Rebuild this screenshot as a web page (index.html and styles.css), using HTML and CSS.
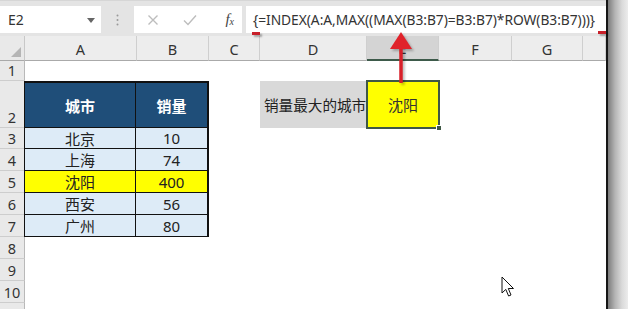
FILE: index.html
```html
<!DOCTYPE html>
<html lang="zh">
<head>
<meta charset="utf-8">
<title>Excel INDEX MAX</title>
<link rel="stylesheet" href="styles.css">
</head>
<body>
<div class="screen">
  <div class="window">
    <div class="fbar">
      <div class="namebox">
        <span class="name">E2</span>
        <svg class="dd" width="8" height="5" viewBox="0 0 8 5"><path d="M0 0H8L4 5Z" fill="#666"/></svg>
      </div>
      <div class="grip">
        <svg width="3" height="12" viewBox="0 0 3 12"><circle cx="1.5" cy="1.5" r="1" fill="#999"/><circle cx="1.5" cy="6" r="1" fill="#999"/><circle cx="1.5" cy="10.5" r="1" fill="#999"/></svg>
      </div>
      <div class="fnbox">
        <svg class="ic" width="12" height="12" viewBox="0 0 12 12"><path d="M1.5 1.5L10.5 10.5M10.5 1.5L1.5 10.5" stroke="#bdbdbd" stroke-width="1.4" fill="none"/></svg>
        <svg class="ic" width="14" height="12" viewBox="0 0 14 12"><path d="M1 6.5L5 10.5L13 1.5" stroke="#bdbdbd" stroke-width="1.4" fill="none"/></svg>
        <span class="fx">f<sub>x</sub></span>
      </div>
      <div class="formula">{=INDEX(A:A,MAX((MAX(B3:B7)=B3:B7)*ROW(B3:B7)))}</div>
    </div>

    <div class="sheet">
      <div class="corner"><svg width="10" height="10" viewBox="0 0 10 10"><path d="M10 0V10H0Z" fill="#b5b5b5"/></svg></div>
      <div class="ch">A</div>
      <div class="ch">B</div>
      <div class="ch">C</div>
      <div class="ch">D</div>
      <div class="ch ch-sel">E</div>
      <div class="ch">F</div>
      <div class="ch">G</div>
      <div class="ch"></div>

      <div class="rh">1</div>
      <div class="rh">2</div>
      <div class="rh">3</div>
      <div class="rh">4</div>
      <div class="rh">5</div>
      <div class="rh">6</div>
      <div class="rh">7</div>
      <div class="rh">8</div>
      <div class="rh">9</div>
      <div class="rh">10</div>
      <div class="rh"></div>

      <div class="tbl">
        <div class="tc th">城市</div>
        <div class="tc th">销量</div>
        <div class="tc">北京</div>
        <div class="tc">10</div>
        <div class="tc">上海</div>
        <div class="tc">74</div>
        <div class="tc hl">沈阳</div>
        <div class="tc hl">400</div>
        <div class="tc">西安</div>
        <div class="tc">56</div>
        <div class="tc last">广州</div>
        <div class="tc last">80</div>
      </div>

      <div class="label">销量最大的城市</div>
      <div class="result">沈阳<span class="handle"></span></div>
    </div>

    <span class="mark mark-l"></span>
    <span class="mark mark-r"></span>
    <svg class="arrow" width="30" height="56" viewBox="0 0 30 56">
      <path d="M15 16V52" stroke="#d8202a" stroke-width="3.5"/>
      <path d="M4 18H26L15 1Z" fill="#e0232b"/>
    </svg>
    <svg class="cursor" width="14" height="22" viewBox="0 0 14 22">
      <path d="M1 1V17L4.8 13.4L7.6 20L10 19L7.3 12.5H12.5Z" fill="#fff" stroke="#111" stroke-width="1" stroke-linejoin="round"/>
    </svg>
  </div>
  <div class="shade"></div>
</div>
</body>
</html>
```

FILE: styles.css
```css
* { box-sizing: border-box; }
html, body { margin: 0; padding: 0; background: #fff; }
body { font-family: "Noto Sans", "Noto Sans CJK SC", sans-serif; color: #222; }

.screen {
  width: 628px;
  height: 309px;
  overflow: hidden;
  display: flex;
}
.window {
  position: relative;
  width: 608px;
  flex: none;
  background: #fff;
  border-right: 2px solid #151515;
  display: flex;
  flex-direction: column;
}
.shade {
  flex: 1;
  background: linear-gradient(to right, #7c7c7c 0%, #b4b4b4 35%, #dadada 70%, #ececec 100%);
}

/* formula bar */
.fbar {
  height: 36px;
  flex: none;
  background: #e4e4e4;
  display: flex;
  align-items: flex-start;
  padding-top: 5px;
  border-top: 1px solid #d6d6d6;
}
.namebox {
  width: 101px;
  height: 27px;
  background: #fff;
  display: flex;
  align-items: center;
  justify-content: space-between;
  padding: 0 6px 0 8px;
}
.name { font-size: 14px; color: #333; }
.dd { margin-top: 1px; }
.grip {
  width: 33px;
  height: 27px;
  display: flex;
  align-items: center;
  justify-content: center;
}
.fnbox {
  width: 108px;
  height: 27px;
  background: #fff;
  display: flex;
  align-items: center;
  padding: 0 8px 0 13px;
  gap: 22px;
}
.fnbox .ic:nth-child(2) { margin-left: 2px; }
.fx {
  font-family: "Liberation Serif", serif;
  font-style: italic;
  font-size: 15px;
  color: #444;
  margin-left: auto;
}
.fx sub { font-size: 10px; vertical-align: -1px; }
.formula {
  flex: 1;
  height: 27px;
  margin-left: 4px;
  background: #fff;
  padding-left: 7px;
  font-size: 13.8px;
  line-height: 27px;
  color: #333;
  white-space: nowrap;
  letter-spacing: -0.05px;
}

/* sheet grid */
.sheet {
  flex: 1;
  display: grid;
  grid-template-columns: 25px 112px 72px 51px 107px 72px 73px 71px 1fr;
  grid-template-rows: 25px 20px 47px 21px repeat(7, 22px) 22px;
  background: #fff;
}
.corner {
  background: #e9e9e9;
  border-right: 1px solid #c8c8c8;
  border-bottom: 1px solid #a9a9a9;
  display: flex;
  align-items: flex-end;
  justify-content: flex-end;
  padding: 0 3px 3px 0;
}
.ch {
  background: #ededed;
  border-right: 1px solid #cfcfcf;
  border-bottom: 1px solid #aaaaaa;
  font-size: 14.5px;
  color: #333;
  display: flex;
  align-items: center;
  justify-content: center;
  padding-top: 1px;
}
.ch-sel {
  background: #d4d4d4;
  border-bottom: 2px solid #3d5a4a;
}
.rh {
  grid-column: 1;
  background: #e9e9e9;
  border-right: 1px solid #b9b9b9;
  border-bottom: 1px solid #cdcdcd;
  font-size: 14.5px;
  line-height: 1;
  color: #333;
  display: flex;
  align-items: flex-end;
  justify-content: center;
  padding-bottom: 3px;
}

/* data table */
.tbl {
  grid-column: 2 / 4;
  grid-row: 3 / 9;
  margin-left: -1px;
  border: 2px solid #111;
  border-left-width: 1px;
  display: grid;
  grid-template-columns: 111px 1fr;
  grid-template-rows: 45px 21px 22px 22px 22px 1fr;
}
.tc {
  background: #ddebf7;
  border-bottom: 1px solid #111;
  display: flex;
  align-items: center;
  justify-content: center;
  font-size: 15px;
  color: #222;
}
.tc:nth-child(odd) { border-right: 1px solid #111; }
.tc.last { border-bottom: 0; }
.th {
  background: #1f4e79;
  color: #fff;
  font-weight: bold;
}
.hl { background: #ffff00; }

.label {
  grid-column: 5;
  grid-row: 3;
  background: #d9d9d9;
  font-size: 14.6px;
  white-space: nowrap;
  display: flex;
  align-items: center;
  padding-left: 4px;
  color: #222;
}
.result {
  position: relative;
  grid-column: 6;
  grid-row: 3;
  margin: -1px -1px -1px -1px;
  background: #ffff00;
  border: 2px solid #3f5846;
  display: flex;
  align-items: center;
  justify-content: center;
  font-size: 15px;
  color: #333;
}
.handle {
  position: absolute;
  right: -4px;
  bottom: -4px;
  width: 6px;
  height: 6px;
  background: #3f5846;
  border: 1px solid #fff;
}

/* overlays */
.arrow {
  position: absolute;
  left: 386px;
  top: 31px;
  filter: drop-shadow(2px 2px 1px rgba(0,0,0,0.25));
}
.mark {
  position: absolute;
  width: 8px;
  height: 3px;
  background: #c8202a;
  box-shadow: 2px 2px 2px rgba(0,0,0,0.3);
}
.mark-l { left: 252px; top: 32px; }
.mark-r { left: 598px; top: 31px; }
.cursor {
  position: absolute;
  left: 501px;
  top: 276px;
}
```
